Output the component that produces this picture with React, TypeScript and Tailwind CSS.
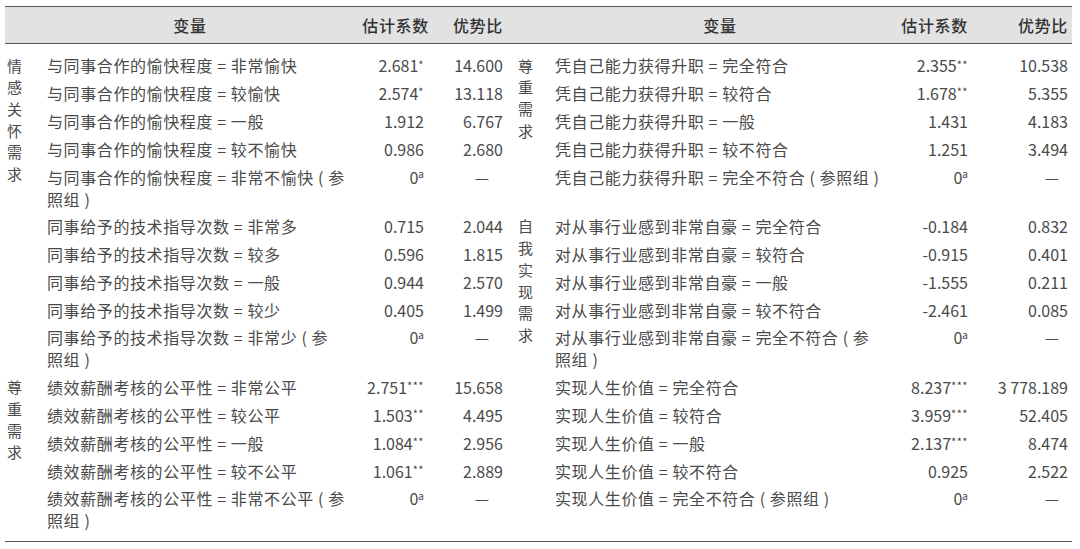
type Coef = { v: string; s?: string; ref?: boolean };
type Row = { name: string[]; coef: Coef; or: string };

const leftRows: Row[] = [
  { name: ["与同事合作的愉快程度 = 非常愉快"], coef: { v: "2.681", s: "*" }, or: "14.600" },
  { name: ["与同事合作的愉快程度 = 较愉快"], coef: { v: "2.574", s: "*" }, or: "13.118" },
  { name: ["与同事合作的愉快程度 = 一般"], coef: { v: "1.912" }, or: "6.767" },
  { name: ["与同事合作的愉快程度 = 较不愉快"], coef: { v: "0.986" }, or: "2.680" },
  { name: ["与同事合作的愉快程度 = 非常不愉快 ( 参", "照组 )"], coef: { v: "0", ref: true }, or: "—" },
  { name: ["同事给予的技术指导次数 = 非常多"], coef: { v: "0.715" }, or: "2.044" },
  { name: ["同事给予的技术指导次数 = 较多"], coef: { v: "0.596" }, or: "1.815" },
  { name: ["同事给予的技术指导次数 = 一般"], coef: { v: "0.944" }, or: "2.570" },
  { name: ["同事给予的技术指导次数 = 较少"], coef: { v: "0.405" }, or: "1.499" },
  { name: ["同事给予的技术指导次数 = 非常少 ( 参", "照组 )"], coef: { v: "0", ref: true }, or: "—" },
  { name: ["绩效薪酬考核的公平性 = 非常公平"], coef: { v: "2.751", s: "***" }, or: "15.658" },
  { name: ["绩效薪酬考核的公平性 = 较公平"], coef: { v: "1.503", s: "**" }, or: "4.495" },
  { name: ["绩效薪酬考核的公平性 = 一般"], coef: { v: "1.084", s: "**" }, or: "2.956" },
  { name: ["绩效薪酬考核的公平性 = 较不公平"], coef: { v: "1.061", s: "**" }, or: "2.889" },
  { name: ["绩效薪酬考核的公平性 = 非常不公平 ( 参", "照组 )"], coef: { v: "0", ref: true }, or: "—" },
];

const rightRows: Row[] = [
  { name: ["凭自己能力获得升职 = 完全符合"], coef: { v: "2.355", s: "**" }, or: "10.538" },
  { name: ["凭自己能力获得升职 = 较符合"], coef: { v: "1.678", s: "**" }, or: "5.355" },
  { name: ["凭自己能力获得升职 = 一般"], coef: { v: "1.431" }, or: "4.183" },
  { name: ["凭自己能力获得升职 = 较不符合"], coef: { v: "1.251" }, or: "3.494" },
  { name: ["凭自己能力获得升职 = 完全不符合 ( 参照组 )"], coef: { v: "0", ref: true }, or: "—" },
  { name: ["对从事行业感到非常自豪 = 完全符合"], coef: { v: "-0.184" }, or: "0.832" },
  { name: ["对从事行业感到非常自豪 = 较符合"], coef: { v: "-0.915" }, or: "0.401" },
  { name: ["对从事行业感到非常自豪 = 一般"], coef: { v: "-1.555" }, or: "0.211" },
  { name: ["对从事行业感到非常自豪 = 较不符合"], coef: { v: "-2.461" }, or: "0.085" },
  { name: ["对从事行业感到非常自豪 = 完全不符合 ( 参", "照组 )"], coef: { v: "0", ref: true }, or: "—" },
  { name: ["实现人生价值 = 完全符合"], coef: { v: "8.237", s: "***" }, or: "3 778.189" },
  { name: ["实现人生价值 = 较符合"], coef: { v: "3.959", s: "***" }, or: "52.405" },
  { name: ["实现人生价值 = 一般"], coef: { v: "2.137", s: "***" }, or: "8.474" },
  { name: ["实现人生价值 = 较不符合"], coef: { v: "0.925" }, or: "2.522" },
  { name: ["实现人生价值 = 完全不符合 ( 参照组 )"], coef: { v: "0", ref: true }, or: "—" },
];

// category cells keyed by first row: [span, label]
const leftCats: Record<number, [number, string]> = {
  0: [10, "情感关怀需求"],
  10: [5, "尊重需求"],
};
const rightCats: Record<number, [number, string]> = {
  0: [5, "尊重需求"],
  5: [5, "自我实现需求"],
  10: [5, ""],
};

function CatCell({ span, label, pad }: { span: number; label: string; pad: string }) {
  return (
    <td rowSpan={span} className={`align-top pt-[3px] ${pad}`}>
      <div className="flex flex-col text-[15px] leading-[21.7px]">
        {label.split("").map((c, i) => (
          <span key={i}>{c}</span>
        ))}
      </div>
    </td>
  );
}

function CoefText({ c }: { c: Coef }) {
  return (
    <span className="whitespace-nowrap">
      {c.v}
      {c.s && <sup className="text-[11px] top-[-0.35em] tracking-[0.5px]">{c.s}</sup>}
      {c.ref && <sup className="text-[10px] top-[-0.55em]">a</sup>}
    </span>
  );
}

export default function App() {
  return (
    <div className="w-[1080px] h-[549px] bg-white pt-[6px] px-[5px] font-['Noto_Sans_CJK_SC','Noto_Sans',sans-serif] text-[16px] text-[#4a4a4a]">
      <table className="table-fixed border-collapse w-[1067px]">
        <colgroup>
          <col className="w-[35px]" />
          <col className="w-[300px]" />
          <col className="w-[90px]" />
          <col className="w-[75px]" />
          <col className="w-[45px]" />
          <col className="w-[340px]" />
          <col className="w-[80px]" />
          <col className="w-[102px]" />
        </colgroup>
        <thead>
          <tr className="bg-[#e2e2e2] border-t-[1.5px] border-b-[1.5px] border-[#555] text-[#333] tracking-[0.7px]">
            <th className="h-[37px] p-0"></th>
            <th className="h-[37px] p-0 text-center font-medium">变量</th>
            <th className="h-[37px] p-0 pr-[1px] text-right font-medium">估计系数</th>
            <th className="h-[37px] p-0 pr-[2px] text-right font-medium">优势比</th>
            <th className="h-[37px] p-0"></th>
            <th className="h-[37px] p-0 text-center font-medium">变量</th>
            <th className="h-[37px] p-0 pr-[2px] text-right font-medium">估计系数</th>
            <th className="h-[37px] p-0 pr-[4px] text-right font-medium">优势比</th>
          </tr>
        </thead>
        <tbody>
          <tr>
            <td colSpan={8} className="h-[8px] p-0"></td>
          </tr>
          {leftRows.map((l, i) => {
            const r = rightRows[i];
            const lc = leftCats[i];
            const rc = rightCats[i];
            return (
              <tr key={i} className="align-top leading-[22px]">
                {lc && <CatCell span={lc[0]} label={lc[1]} pad="pl-[2px]" />}
                <td className="py-[2.9px] pl-[7px] tracking-[0.6px] whitespace-nowrap">
                  {l.name.map((t, k) => (
                    <div key={k}>{t}</div>
                  ))}
                </td>
                <td className="py-[2.9px] pr-[6px] text-right">
                  <CoefText c={l.coef} />
                </td>
                <td className="py-[2.9px] pr-[2px] text-right">
                  {l.or === "—" ? <span className="mr-[14px]">—</span> : l.or}
                </td>
                {rc && <CatCell span={rc[0]} label={rc[1]} pad="pl-[13px]" />}
                <td className="py-[2.9px] pl-[5px] tracking-[0.6px] whitespace-nowrap">
                  {r.name.map((t, k) => (
                    <div key={k}>{t}</div>
                  ))}
                </td>
                <td className="py-[2.9px] pr-[2px] text-right">
                  <CoefText c={r.coef} />
                </td>
                <td className="py-[2.9px] pr-[4px] text-right whitespace-nowrap">
                  {r.or === "—" ? <span className="mr-[9px]">—</span> : r.or}
                </td>
              </tr>
            );
          })}
          <tr className="border-b-[1.5px] border-[#555]">
            <td colSpan={8} className="h-[7px] p-0"></td>
          </tr>
        </tbody>
      </table>
    </div>
  );
}
